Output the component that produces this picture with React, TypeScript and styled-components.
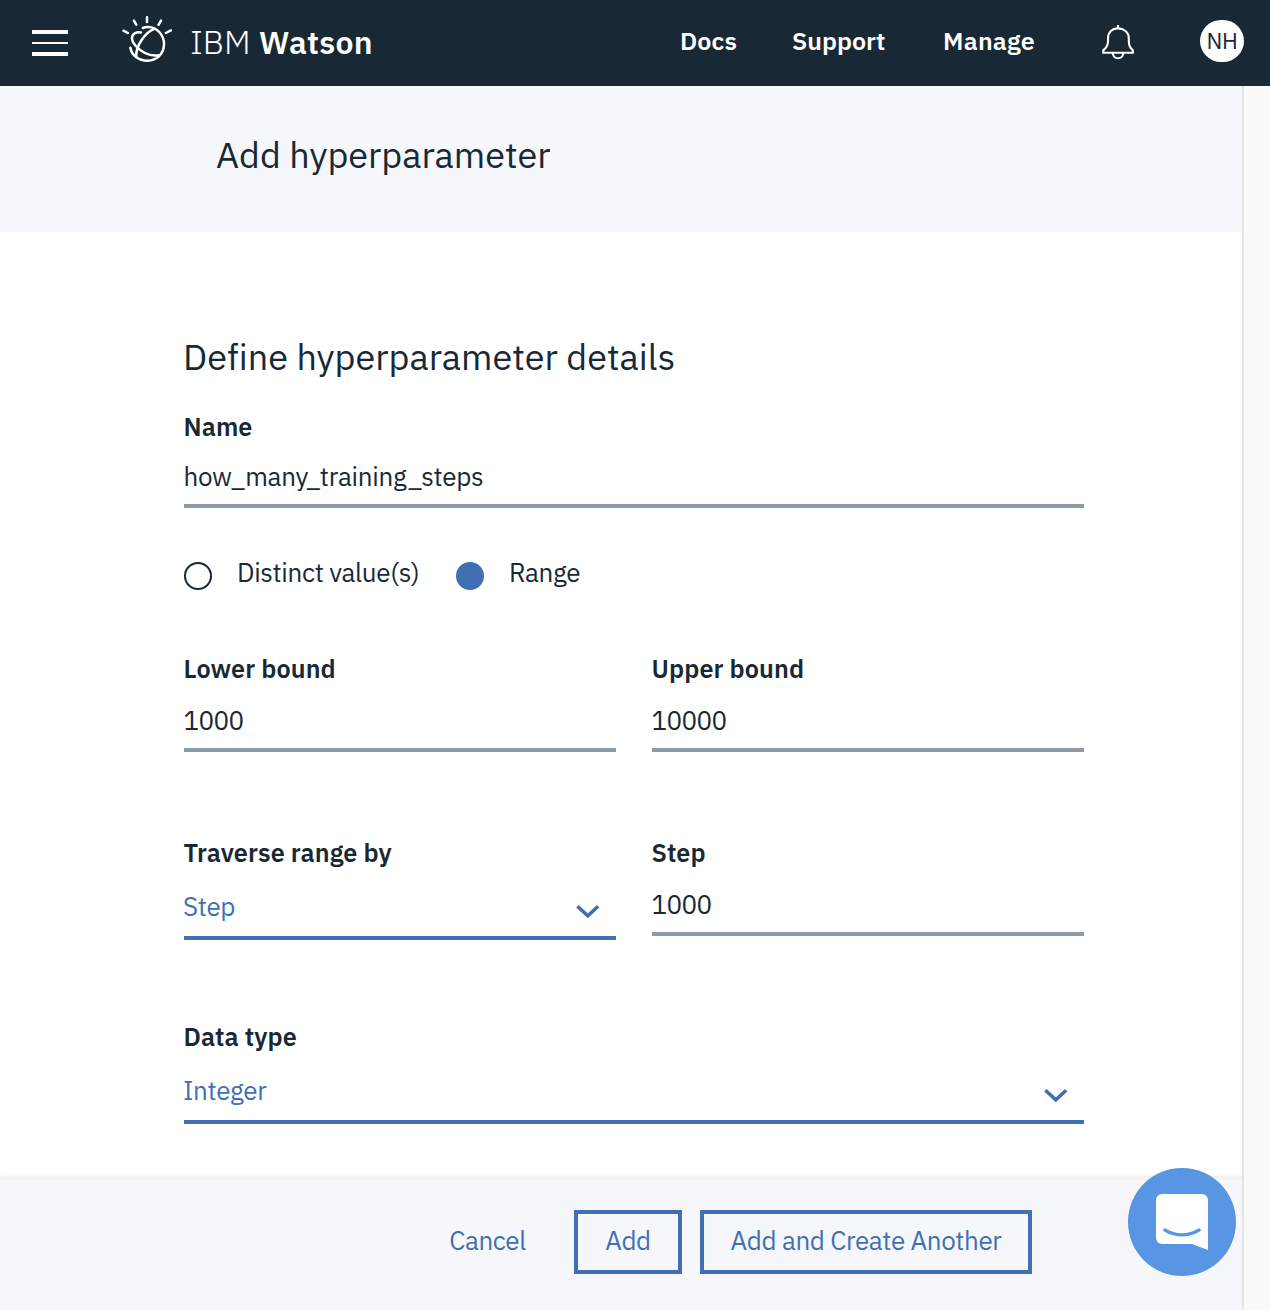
import React from 'react';
import styled, { createGlobalStyle } from 'styled-components';

const ink = '#182935';
const blue = '#4170b2';
const band = '#f6f7fb';

const GlobalStyle = createGlobalStyle`
  * { box-sizing: border-box; }
  body { margin: 0; background: #fff; }
`;

const Page = styled.div`
  width: 1270px;
  height: 1310px;
  display: flex;
  flex-direction: column;
  overflow: hidden;
  font: 400 26px/32px "IBM Plex Sans", Roboto, sans-serif;
  color: ${ink};
  white-space: nowrap;
`;

const Header = styled.header`
  flex: none;
  height: 86px;
  padding-left: 32px;
  display: flex;
  align-items: flex-start;
  background: ${ink};
  color: #fff;
`;

const MenuButton = styled.div`
  width: 36px;
  height: 26px;
  margin-top: 30px;
  display: flex;
  flex-direction: column;
  justify-content: space-between;
`;

const MenuBar = styled.span<{ $thin?: boolean }>`
  height: ${p => (p.$thin ? 2 : 4)}px;
  background: #fff;
`;

const WatsonIcon = styled.svg`
  width: 54px;
  height: 50px;
  margin: 14px 0 0 52px;
`;

const Brand = styled.div`
  width: 190px;
  margin: 21px 0 0 16px;
  display: flex;
  align-items: baseline;
  font-size: 33px;
  line-height: 42px;
`;

const BrandLight = styled.span`
  width: 69px;
  font-weight: 300;
`;

const BrandBold = styled.span`
  font-size: 32px;
  font-weight: 600;
  letter-spacing: 0.3px;
`;

const Nav = styled.nav`
  display: flex;
  margin: 25px 0 0 300px;
  font-size: 25px;
  font-weight: 600;
`;

const NavLink = styled.a<{ $width: number; $track: number }>`
  width: ${p => p.$width}px;
  letter-spacing: ${p => p.$track}px;
`;

const BellIcon = styled.svg`
  width: 34px;
  height: 38px;
  margin: 23px 0 0;
`;

const Avatar = styled.div`
  width: 44px;
  height: 42px;
  margin: 20px 0 0 65px;
  border-radius: 21px;
  display: flex;
  justify-content: center;
  background: #fff;
  color: ${ink};
  font-size: 22.4px;
  line-height: 41px;
  letter-spacing: -0.3px;
`;

const Body = styled.div`
  flex: 1;
  display: flex;
  background: #fafafa;
`;

const Panel = styled.main`
  width: 1244px;
  border-right: 2px solid #e7e7e7;
  display: flex;
  flex-direction: column;
  background: #fff;
`;

const TitleBand = styled.div`
  height: 146px;
  padding: 47px 0 0 216px;
  background: ${band};
`;

const Heading = styled.h1<{ $track: number }>`
  margin: 0;
  font-size: 36px;
  line-height: 44px;
  font-weight: 400;
  letter-spacing: ${p => p.$track}px;
`;

const SectionHeading = styled(Heading)`
  text-indent: -1px;
`;

const Form = styled.form`
  flex: 1;
  width: 900px;
  margin-left: 184px;
  padding-top: 103px;
`;

const Row = styled.div<{ $top: number; $columns?: number }>`
  margin-top: ${p => p.$top}px;
  display: grid;
  grid-template-columns: repeat(${p => p.$columns ?? 1}, 1fr);
  gap: 36px;
  align-items: start;
`;

const Field = styled.div`
  display: flex;
  flex-direction: column;
`;

const Label = styled.label`
  font-size: 25.2px;
  font-weight: 600;
  letter-spacing: 0.1px;
  text-indent: -0.5px;
`;

const Value = styled.div<{ $gap?: number; $track?: number }>`
  height: ${p => 47 + (p.$gap ?? 20)}px;
  padding-top: ${p => (p.$gap ?? 20) - 1}px;
  border-bottom: 4px solid #8c9ba5;
  letter-spacing: ${p => p.$track ?? -0.55}px;
  text-indent: -0.6px;
`;

const Select = styled.div`
  height: 71px;
  padding: 21px 16px 0 0;
  border-bottom: 4px solid ${blue};
  display: flex;
  justify-content: space-between;
  color: ${blue};
  letter-spacing: -0.35px;
  text-indent: -1px;
`;

const ChevronIcon = styled.svg`
  width: 24px;
  height: 16px;
  margin-top: 14px;
`;

const RadioGroup = styled.div`
  margin-top: 48px;
  height: 34px;
  display: flex;
  letter-spacing: -0.32px;
`;

const Radio = styled.div<{ $width: number }>`
  width: ${p => p.$width}px;
  display: flex;
  gap: 25px;
`;

const RadioDot = styled.span<{ $checked?: boolean }>`
  flex: none;
  width: 28px;
  height: 28px;
  margin-top: 6px;
  border-radius: 50%;
  border: 2px solid ${p => (p.$checked ? blue : ink)};
  background: ${p => (p.$checked ? blue : 'transparent')};
`;

const Footer = styled.footer`
  height: 134px;
  padding: 30px 210px 0 0;
  border-top: 4px solid #f2f2f3;
  box-shadow: 0 -1px 3px rgba(0, 0, 0, 0.03);
  display: flex;
  justify-content: flex-end;
  align-items: flex-start;
  background: ${band};
  color: ${blue};
`;

const Button = styled.div<{ $width: number; $plain?: boolean }>`
  width: ${p => p.$width}px;
  height: 64px;
  margin-left: ${p => (p.$plain ? 0 : 18)}px;
  border: 4px solid ${p => (p.$plain ? 'transparent' : blue)};
  display: flex;
  justify-content: center;
  line-height: 53px;
  letter-spacing: -0.4px;
`;

const ChatButton = styled.div`
  position: absolute;
  left: 1128px;
  top: 1168px;
  width: 108px;
  height: 108px;
  border-radius: 50%;
  background: #5896e3;
`;

const ChatIcon = styled.svg`
  display: block;
  width: 108px;
  height: 108px;
`;

function Chevron() {
  return (
    <ChevronIcon viewBox="576 904 24 16" fill="none" stroke={blue} strokeWidth="3.6">
      <path d="M577.4 906.2 587.8 915.9 598.2 906.2" />
    </ChevronIcon>
  );
}

export default function App() {
  return (
    <Page>
      <GlobalStyle />
      <Header>
        <MenuButton>
          <MenuBar />
          <MenuBar $thin />
          <MenuBar />
        </MenuButton>
        <WatsonIcon viewBox="120 14 54 50" fill="none" stroke="#fff" strokeWidth="2.5" strokeLinecap="round">
          <path d="M147 17.300v4.700M133.900 20.600l2.300 4M161 20.600l-2.500 4.200M123.500 30.700l4.400 2.300M170.800 30.300l-5 2.700" />
          <path d="M142.800 28C144.500 27.300 146 27.100 148 27.100C157.300 27.300 164 35 164 44C164 53.500 157 60.700 147.500 60.700C138.500 60.700 131.600 55.200 130.400 47.800" />
          <path d="M141 32.400C136.500 31.600 132.600 33.300 132 37.200C131.300 43 138.600 49.700 145 53C149.600 55.400 154.500 56 159 55.200" />
          <path d="M153.800 29.200C145.500 32.500 136 45 136.200 56" />
        </WatsonIcon>
        <Brand>
          <BrandLight>IBM</BrandLight>
          <BrandBold>Watson</BrandBold>
        </Brand>
        <Nav>
          <NavLink $width={112} $track={0.1}>Docs</NavLink>
          <NavLink $width={151} $track={0}>Support</NavLink>
          <NavLink $width={158} $track={0.25}>Manage</NavLink>
        </Nav>
        <BellIcon viewBox="1101 23 34 38" fill="none" stroke="#fff" strokeWidth="2.1">
          <path d="M1118 25v3.500M1103.300 52.700v-2.500c3-2.300 4.700-5 4.700-9v-3c0-6 4.300-9.800 10-9.800s10.800 3.800 10.800 9.800v3c0 4 1.200 6.700 4 9v2.500zM1112.800 52.700c0 3.500 2.200 5.600 5.200 5.600s5.300-2.100 5.300-5.600" />
        </BellIcon>
        <Avatar>NH</Avatar>
      </Header>
      <Body>
        <Panel>
          <TitleBand>
            <Heading $track={0}>Add hyperparameter</Heading>
          </TitleBand>
          <Form>
            <SectionHeading as="h2" $track={0.02}>Define hyperparameter details</SectionHeading>
            <Row $top={32}>
              <Field>
                <Label>Name</Label>
                <Value $gap={18} $track={-0.27}>how_many_training_steps</Value>
              </Field>
            </Row>
            <RadioGroup>
              <Radio $width={272}><RadioDot />Distinct value(s)</Radio>
              <Radio $width={130}><RadioDot $checked />Range</Radio>
            </RadioGroup>
            <Row $top={63} $columns={2}>
              <Field>
                <Label>Lower bound</Label>
                <Value>1000</Value>
              </Field>
              <Field>
                <Label>Upper bound</Label>
                <Value>10000</Value>
              </Field>
            </Row>
            <Row $top={85} $columns={2}>
              <Field>
                <Label>Traverse range by</Label>
                <Select>Step<Chevron /></Select>
              </Field>
              <Field>
                <Label>Step</Label>
                <Value>1000</Value>
              </Field>
            </Row>
            <Row $top={81}>
              <Field>
                <Label>Data type</Label>
                <Select>Integer<Chevron /></Select>
              </Field>
            </Row>
          </Form>
          <Footer>
            <Button $plain $width={137}>Cancel</Button>
            <Button $width={108}>Add</Button>
            <Button $width={332}>Add and Create Another</Button>
          </Footer>
        </Panel>
      </Body>
      <ChatButton>
        <ChatIcon viewBox="1128 1168 108 108">
          <path d="M1162 1194h40a6 6 0 0 1 6 6v50l-16-6h-30a6 6 0 0 1-6-6v-38a6 6 0 0 1 6-6z" fill="#fff" />
          <path d="M1164.800 1230q17.200 9.800 34.400 0" fill="none" stroke="#5896e3" strokeWidth="3.200" strokeLinecap="round" />
        </ChatIcon>
      </ChatButton>
    </Page>
  );
}
